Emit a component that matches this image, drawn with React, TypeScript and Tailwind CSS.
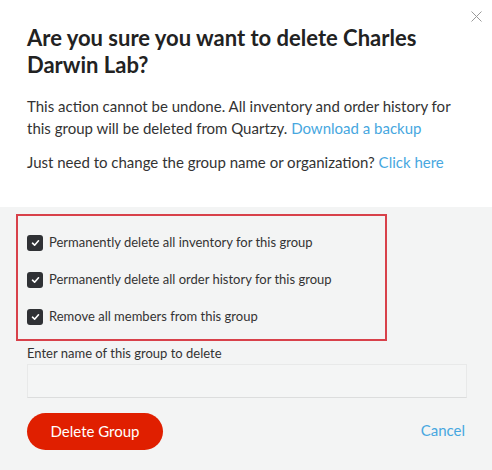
import React from "react";

const font = { fontFamily: '"Lato", "Noto Sans", sans-serif' };

function Check({ label }: { label: string }) {
  return (
    <div className="flex items-center h-[37px]">
      <span className="w-[16px] h-[16px] rounded-[3px] bg-[#2f3135] flex items-center justify-center mr-[6px]">
        <svg width="9" height="8" viewBox="0 0 9 8">
          <path d="M1.5 4.2 L3.6 6.2 L7.5 1.8" stroke="#fff" strokeWidth="1.6" fill="none" strokeLinecap="round" strokeLinejoin="round" />
        </svg>
      </span>
      <span className="text-[13px] text-[#333]">{label}</span>
    </div>
  );
}

export default function App() {
  return (
    <div className="w-[492px] h-[470px] bg-white overflow-hidden relative" style={font}>
      <button className="absolute right-[10px] top-[11px] w-[11px] h-[11px]">
        <svg width="11" height="11" viewBox="0 0 11 11">
          <path d="M0.5 0.5 L10.5 10.5 M10.5 0.5 L0.5 10.5" stroke="#9a9a9a" strokeWidth="1" />
        </svg>
      </button>
      <div className="px-[27px] pt-[24px] pb-[34px]">
        <h1 className="text-[22px] leading-[27px] font-bold text-[#222]">
          Are you sure you want to delete Charles Darwin Lab?
        </h1>
        <p className="mt-[17px] text-[15px] leading-[22px] text-[#333]">
          This action cannot be undone. All inventory and order history for this group will be deleted from Quartzy.{" "}
          <a className="text-[#47a7e0]">Download a backup</a>
        </p>
        <p className="mt-[12px] text-[15px] leading-[22px] text-[#333]">
          Just need to change the group name or organization?{" "}
          <a className="text-[#47a7e0]">Click here</a>
        </p>
      </div>
      <div className="bg-[#f3f4f4] h-full pl-[27px] pr-[25px] pt-[7px]">
        <div className="-ml-[11px] w-[371px] border-2 border-[#d8414a] pl-[9px] pt-[8px] pb-[4px]">
          <Check label="Permanently delete all inventory for this group" />
          <Check label="Permanently delete all order history for this group" />
          <Check label="Remove all members from this group" />
        </div>
        <div className="mt-[4px] text-[13px] leading-[16px] text-[#333]">Enter name of this group to delete</div>
        <div className="mt-[3px] h-[34px] border border-[#e8e9e9] border-b-[#dcdddd] bg-[#f4f5f5]" />
        <div className="mt-[15px] flex items-center justify-between">
          <button className="h-[37px] w-[136px] rounded-full bg-[#e01f00] text-white text-[15px]">Delete Group</button>
          <a className="text-[#47a7e0] text-[15px] mr-[2px] -mt-[3px]">Cancel</a>
        </div>
      </div>
    </div>
  );
}
